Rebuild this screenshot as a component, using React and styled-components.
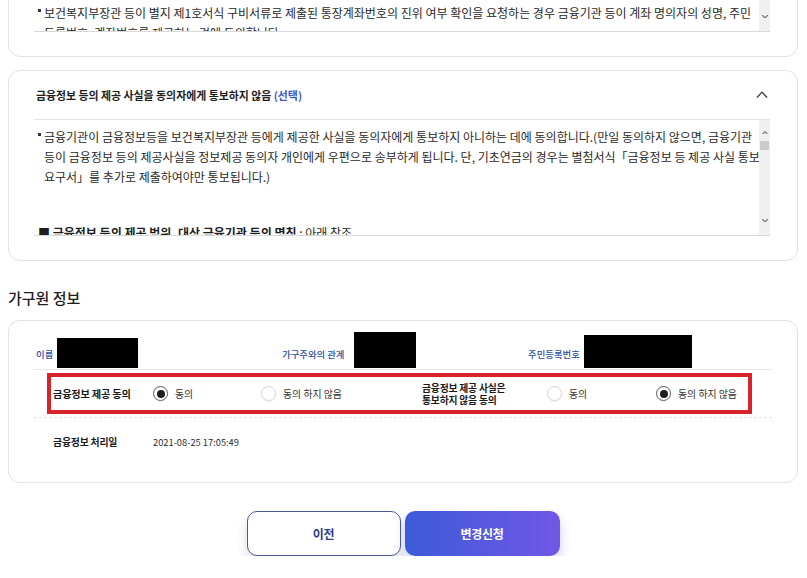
import React from "react";
import styled, { createGlobalStyle } from "styled-components";

const Global = createGlobalStyle`
  html, body { margin: 0; padding: 0; background: #fff; overflow: hidden; }
  body {
    font-family: "Noto Sans CJK KR", "Noto Sans", sans-serif;
    color: #222;
    letter-spacing: 0;
  }
  * { box-sizing: border-box; }
`;

const Page = styled.div`
  margin-top: -134px;
  padding: 0 9px 0 8px;
  display: flex;
  flex-direction: column;
`;

const Card = styled.section`
  border: 1px solid #e2e2e2;
  border-radius: 12px;
  background: #fff;
  padding: ${(p) => p.$pad || "0 27px 24px 25px"};
  & + & { margin-top: 13px; }
`;

const CardHeader = styled.div`
  height: 49px;
  display: flex;
  align-items: center;
  justify-content: space-between;
  border-bottom: 1px solid #e4e4e4;
  padding: 0 0 0 2px;
`;

const CardTitle = styled.h3`
  margin: 0;
  font-size: 10.9px;
  font-weight: 700;
  color: #1e1e1e;
  line-height: 20px;
`;

const Optional = styled.span`
  color: #3f57cc;
`;

const Toggle = styled.span`
  display: flex;
  width: 12px;
  margin-right: 2px;
  color: #333;
`;

const ScrollBox = styled.div`
  display: flex;
  height: 116px;
  border-bottom: 1px solid #d9d9d9;
`;

const ScrollContent = styled.div`
  flex: 1;
  overflow: hidden;
  padding: 7px 0 0 4px;
  font-size: 12px;
  line-height: 20px;
  color: #2a2a2a;
`;

const Bullet = styled.div`
  display: flex;
`;

const Dot = styled.span`
  flex: none;
  width: 6px;
  height: 20px;
  display: flex;
  align-items: flex-start;
  padding-top: 6px;
  &::before {
    content: "";
    width: 3px;
    height: 3px;
    background: #333;
  }
`;

const Line = styled.span`
  display: block;
  white-space: nowrap;
`;

const Notice = styled.div`
  margin-top: 36px;
  font-weight: 700;
  color: #1e1e1e;
  white-space: nowrap;
  & span { font-weight: 400; }
`;

const Track = styled.div`
  flex: none;
  width: 11px;
  background: #f0f0f0;
  display: flex;
  flex-direction: column;
  align-items: center;
  padding: 4px 0 6px;
`;

const ArrowBtn = styled.span`
  height: 17px;
  display: flex;
  align-items: center;
  justify-content: center;
  color: #777;
`;

const Thumb = styled.span`
  width: 9px;
  height: 9px;
  margin-top: ${(p) => p.$top}px;
  background: #cbcbcb;
`;

const Spacer = styled.span`
  flex: 1;
`;

const SectionTitle = styled.h2`
  margin: 27px 0 12px;
  font-size: 15px;
  line-height: 20px;
  font-weight: 500;
  color: #1e1e1e;
`;

const InfoRow = styled.div`
  display: grid;
  grid-template-columns: repeat(3, 1fr);
  height: 38px;
  border-bottom: 1px solid #e6e6e6;
`;

const InfoItem = styled.div`
  display: flex;
  align-items: flex-end;
  padding-left: 2px;
`;

const InfoLabel = styled.span`
  font-size: 9.4px;
  line-height: 12px;
  font-weight: 500;
  color: #2d4f9c;
  padding-bottom: 10px;
`;

const Redacted = styled.span`
  width: ${(p) => p.$w}px;
  height: ${(p) => p.$h}px;
  margin-left: ${(p) => p.$gap}px;
  margin-bottom: 2px;
  background: #000;
`;

const Highlight = styled.div`
  margin: 3px 20px 0 13px;
  height: 41px;
  border: 4px solid #d9232b;
  padding-left: 2px;
  display: grid;
  grid-template-columns: 100px 108px 161px 125px 109px 1fr;
  align-items: center;
`;

const RowLabel = styled.span`
  font-size: ${(p) => p.$size || 10.2}px;
  font-weight: 700;
  line-height: 12px;
  letter-spacing: -0.02em;
  color: #1a1a1a;
`;

const Option = styled.label`
  display: flex;
  align-items: center;
  gap: 7px;
  font-size: 9.9px;
  color: #333;
`;

const Radio = styled.span`
  flex: none;
  width: 15px;
  height: 15px;
  border-radius: 50%;
  border: 1px solid ${(p) => (p.$on ? "#555" : "#d6d6d6")};
  background: #fff;
  display: flex;
  align-items: center;
  justify-content: center;
  box-shadow: ${(p) => (p.$on ? "none" : "0 1px 2px rgba(0,0,0,0.06)")};
`;

const RadioDot = styled.span`
  width: 8px;
  height: 8px;
  border-radius: 50%;
  background: #1e1e1e;
`;

const DateRow = styled.div`
  margin-top: 3px;
  border-top: 1px dashed #e2e2e2;
  height: 48px;
  padding-left: 19px;
  display: grid;
  grid-template-columns: 100px 1fr;
  align-items: center;
`;

const DateValue = styled.span`
  font-size: 9.3px;
  color: #2a2a2a;
`;

const Actions = styled.div`
  margin-top: 28px;
  display: flex;
  justify-content: center;
  gap: 4px;
`;

const Button = styled.button`
  width: ${(p) => (p.$primary ? 155 : 154)}px;
  height: 45px;
  border-radius: 10px;
  font-family: inherit;
  font-size: 12px;
  font-weight: 700;
  letter-spacing: -0.02em;
  cursor: pointer;
  border: ${(p) => (p.$primary ? "none" : "1px solid #4a5896")};
  color: ${(p) => (p.$primary ? "#fff" : "#2c3c86")};
  background: ${(p) =>
    p.$primary ? "linear-gradient(90deg, #3c5bd8 0%, #7157e6 100%)" : "#fff"};
  box-shadow: ${(p) =>
    p.$primary
      ? "0 6px 12px rgba(95, 85, 225, 0.28)"
      : "0 6px 12px rgba(0, 0, 0, 0.14)"};
`;

const Chevron = ({ up, size = 7, stroke = 1.2 }) => (
  <svg width={size} height={size * 0.6} viewBox="0 0 10 6" fill="none">
    <path
      d={up ? "M1 5.2 L5 1 L9 5.2" : "M1 0.8 L5 5 L9 0.8"}
      stroke="currentColor"
      strokeWidth={stroke * (10 / size)}
      strokeLinecap="round"
      strokeLinejoin="round"
    />
  </svg>
);

const Scrollbar = ({ thumbTop }) => (
  <Track>
    <ArrowBtn>
      <Chevron up size={6} />
    </ArrowBtn>
    <Thumb $top={thumbTop} />
    <Spacer />
    <ArrowBtn>
      <Chevron size={6} />
    </ArrowBtn>
  </Track>
);

const RadioOption = ({ on, children }) => (
  <Option>
    <Radio $on={on}>{on && <RadioDot />}</Radio>
    {children}
  </Option>
);

export default function App() {
  return (
    <>
      <Global />
      <Page>
        <Card>
          <CardHeader>
            <CardTitle>
              금융정보 등의 제공에 동의 <Optional>(필수)</Optional>
            </CardTitle>
            <Toggle>
              <Chevron up size={12} />
            </Toggle>
          </CardHeader>
          <ScrollBox>
            <ScrollContent>
              <Bullet>
                <Dot />
                <div>
                  <Line>금융기관 등이 금융정보 등을 보건복지부장관 등에게 제공하는 것에 동의합니다.</Line>
                </div>
              </Bullet>
              <Bullet>
                <Dot />
                <div>
                  <Line>제공된 금융정보 등은 사회보장급여의 수급자격 및 급여액의 결정·확인을 위한 목적으로만 이용됩니다.</Line>
                  <Line>동의서의 유효기간은 급여의 결정 및 확인 조사가 종료되는 시점까지입니다.</Line>
                </div>
              </Bullet>
              <Bullet>
                <Dot />
                <div>
                  <Line>동의자는 언제든지 동의를 철회할 수 있습니다.</Line>
                </div>
              </Bullet>
              <Bullet>
                <Dot />
                <div>
                  <Line>
                    보건복지부장관 등이 별지 제1호서식 구비서류로 제출된 통장계좌번호의 진위 여부 확인을 요청하는 경우 금융기관 등이 계좌 명의자의 성명, 주민
                  </Line>
                  <Line>등록번호, 계좌번호를 제공하는 것에 동의합니다.</Line>
                </div>
              </Bullet>
            </ScrollContent>
            <Scrollbar thumbTop={40} />
          </ScrollBox>
        </Card>

        <Card>
          <CardHeader>
            <CardTitle>
              금융정보 등의 제공 사실을 동의자에게 통보하지 않음 <Optional>(선택)</Optional>
            </CardTitle>
            <Toggle>
              <Chevron up size={12} />
            </Toggle>
          </CardHeader>
          <ScrollBox>
            <ScrollContent>
              <Bullet>
                <Dot />
                <div>
                  <Line>
                    금융기관이 금융정보등을 보건복지부장관 등에게 제공한 사실을 동의자에게 통보하지 아니하는 데에 동의합니다.(만일 동의하지 않으면, 금융기관
                  </Line>
                  <Line>
                    등이 금융정보 등의 제공사실을 정보제공 동의자 개인에게 우편으로 송부하게 됩니다. 단, 기초연금의 경우는 별첨서식「금융정보 등 제공 사실 통보
                  </Line>
                  <Line>요구서」를 추가로 제출하여야만 통보됩니다.)</Line>
                </div>
              </Bullet>
              <Notice>
                ■ 금융정보 등의 제공 범위, 대상 금융기관 등의 명칭 <span>: 아래 참조</span>
              </Notice>
            </ScrollContent>
            <Scrollbar thumbTop={0} />
          </ScrollBox>
        </Card>

        <SectionTitle>가구원 정보</SectionTitle>

        <Card $pad="11px 25px 17px 25px">
          <InfoRow>
            <InfoItem>
              <InfoLabel>이름</InfoLabel>
              <Redacted $w={81} $h={30} $gap={4} />
            </InfoItem>
            <InfoItem>
              <InfoLabel>가구주와의 관계</InfoLabel>
              <Redacted $w={62} $h={36} $gap={9} />
            </InfoItem>
            <InfoItem>
              <InfoLabel>주민등록번호</InfoLabel>
              <Redacted $w={108} $h={33} $gap={4} />
            </InfoItem>
          </InfoRow>

          <Highlight>
            <RowLabel>금융정보 제공 동의</RowLabel>
            <RadioOption on>동의</RadioOption>
            <RadioOption>동의 하지 않음</RadioOption>
            <RowLabel $size={9.8}>
              금융정보 제공 사실은
              <br />
              통보하지 않음 동의
            </RowLabel>
            <RadioOption>동의</RadioOption>
            <RadioOption on>동의 하지 않음</RadioOption>
          </Highlight>

          <DateRow>
            <RowLabel $size={9.9}>금융정보 처리일</RowLabel>
            <DateValue>2021-08-25 17:05:49</DateValue>
          </DateRow>
        </Card>

        <Actions>
          <Button type="button">이전</Button>
          <Button type="button" $primary>
            변경신청
          </Button>
        </Actions>
      </Page>
    </>
  );
}
